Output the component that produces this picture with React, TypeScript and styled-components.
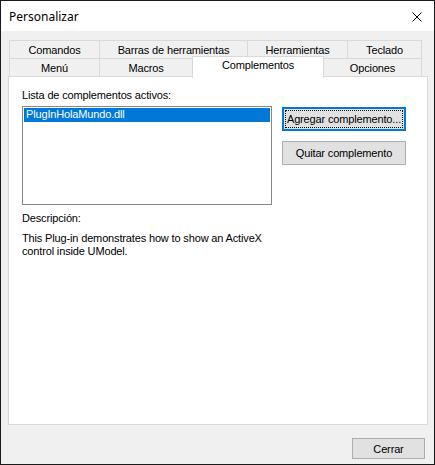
import React from "react";
import styled, { createGlobalStyle } from "styled-components";

const GlobalStyle = createGlobalStyle`
  html, body { margin: 0; padding: 0; background: #ffffff; }
  * { box-sizing: border-box; }
`;

const Window = styled.div`
  width: 435px;
  height: 465px;
  border: 1px solid #1a1a1a;
  background: #f0f0f0;
  display: flex;
  flex-direction: column;
  font-family: "Liberation Sans", Arial, sans-serif;
  font-size: 11px;
  letter-spacing: -0.15px;
  color: #000;
`;

const TitleBar = styled.div`
  height: 30px;
  background: #ffffff;
  display: flex;
  align-items: center;
  justify-content: space-between;
  padding: 0 12px 0 8px;
  flex-shrink: 0;
`;

const Title = styled.span`
  font-family: "Noto Sans", "Segoe UI", sans-serif;
  font-size: 12px;
  letter-spacing: 0;
  color: #000;
`;

const CloseIcon = styled.svg`
  width: 10px;
  height: 10px;
  display: block;
  margin-top: 1px;
`;

const Body = styled.div`
  flex: 1;
  display: flex;
  flex-direction: column;
  padding: 9px 0 0 7px;
`;

const TabRow = styled.div`
  display: flex;
  margin-left: 1px;
  height: 19px;
  align-items: flex-end;
`;

const Tab = styled.div<{ $w: number; $selected?: boolean }>`
  width: ${(p) => p.$w}px;
  height: ${(p) => (p.$selected ? 22 : 19)}px;
  margin-left: -1px;
  margin-bottom: ${(p) => (p.$selected ? -1 : 0)}px;
  border: 1px solid #d9d9d9;
  border-bottom: ${(p) => (p.$selected ? "none" : "1px solid #d9d9d9")};
  background: ${(p) => (p.$selected ? "#ffffff" : "#f0f0f0")};
  display: flex;
  align-items: ${(p) => (p.$selected ? "flex-start" : "center")};
  padding-top: ${(p) => (p.$selected ? 2 : 0)}px;
  justify-content: center;
  position: relative;
  z-index: ${(p) => (p.$selected ? 2 : 1)};
  white-space: nowrap;
  font-size: 11px;
  &:first-child { margin-left: 0; }
`;

const SecondRow = styled(TabRow)`
  margin-top: -1px;
`;

const Panel = styled.div`
  width: 420px;
  height: 349px;
  margin-top: -1px;
  background: #ffffff;
  border: 1px solid #d9d9d9;
  padding: 12px 13px 0 13px;
  display: flex;
  flex-direction: column;
  position: relative;
  z-index: 1;
`;

const Label = styled.div`
  line-height: 13px;
  white-space: nowrap;
`;

const ListRow = styled.div`
  display: flex;
  align-items: flex-start;
  gap: 10px;
  margin-top: 4px;
`;

const ListBox = styled.div`
  width: 250px;
  height: 99px;
  border: 1px solid #828790;
  padding: 1px;
  background: #fff;
`;

const ListItem = styled.div<{ $selected?: boolean }>`
  height: 14px;
  line-height: 13px;
  padding-left: 2px;
  background: ${(p) => (p.$selected ? "#0078d7" : "transparent")};
  color: ${(p) => (p.$selected ? "#ffffff" : "#000")};
`;

const ButtonColumn = styled.div`
  display: flex;
  flex-direction: column;
  gap: 10px;
  margin-top: 1px;
`;

const Button = styled.div<{ $default?: boolean; $w: number; $h: number }>`
  width: ${(p) => p.$w}px;
  height: ${(p) => p.$h}px;
  background: #e1e1e1;
  border: ${(p) => (p.$default ? "2px solid #0078d7" : "1px solid #adadad")};
  padding: ${(p) => (p.$default ? 1 : 2)}px;
  display: flex;
  font-size: 11px;
`;

const ButtonInner = styled.div<{ $focus?: boolean }>`
  flex: 1;
  display: flex;
  align-items: center;
  justify-content: center;
  white-space: nowrap;
  border: 1px dotted ${(p) => (p.$focus ? "#000" : "transparent")};
`;

const Description = styled.div`
  margin-top: 7px;
`;

const DescText = styled.div`
  margin-top: 7px;
  line-height: 13px;
  width: 255px;
`;

const Footer = styled.div`
  flex: 1;
  display: flex;
  justify-content: flex-end;
  align-items: flex-start;
  padding: 13px 9px 0 0;
`;

const row1 = [
  { label: "Comandos", w: 91 },
  { label: "Barras de herramientas", w: 149 },
  { label: "Herramientas", w: 101 },
  { label: "Teclado", w: 75 },
];

const row2 = [
  { label: "Menú", w: 91 },
  { label: "Macros", w: 94 },
  { label: "Complementos", w: 132, selected: true },
  { label: "Opciones", w: 99 },
];

export default function App() {
  return (
    <>
      <GlobalStyle />
      <Window>
        <TitleBar>
          <Title>Personalizar</Title>
          <CloseIcon viewBox="0 0 10 10">
            <path d="M0.5 0.5 L9.5 9.5 M9.5 0.5 L0.5 9.5" stroke="#000" strokeWidth="1" fill="none" />
          </CloseIcon>
        </TitleBar>
        <Body>
          <TabRow>
            {row1.map((t) => (
              <Tab key={t.label} $w={t.w}>
                {t.label}
              </Tab>
            ))}
          </TabRow>
          <SecondRow>
            {row2.map((t) => (
              <Tab key={t.label} $w={t.w} $selected={t.selected}>
                {t.label}
              </Tab>
            ))}
          </SecondRow>
          <Panel>
            <Label>Lista de complementos activos:</Label>
            <ListRow>
              <ListBox>
                <ListItem $selected>PlugInHolaMundo.dll</ListItem>
              </ListBox>
              <ButtonColumn>
                <Button $default $w={124} $h={24}>
                  <ButtonInner $focus>Agregar complemento...</ButtonInner>
                </Button>
                <Button $w={124} $h={24}>
                  <ButtonInner>Quitar complemento</ButtonInner>
                </Button>
              </ButtonColumn>
            </ListRow>
            <Description>
              <Label>Descripción:</Label>
              <DescText>
                This Plug-in demonstrates how to show an ActiveX control inside UModel.
              </DescText>
            </Description>
          </Panel>
          <Footer>
            <Button $w={73} $h={21}>
              <ButtonInner>Cerrar</ButtonInner>
            </Button>
          </Footer>
        </Body>
      </Window>
    </>
  );
}
